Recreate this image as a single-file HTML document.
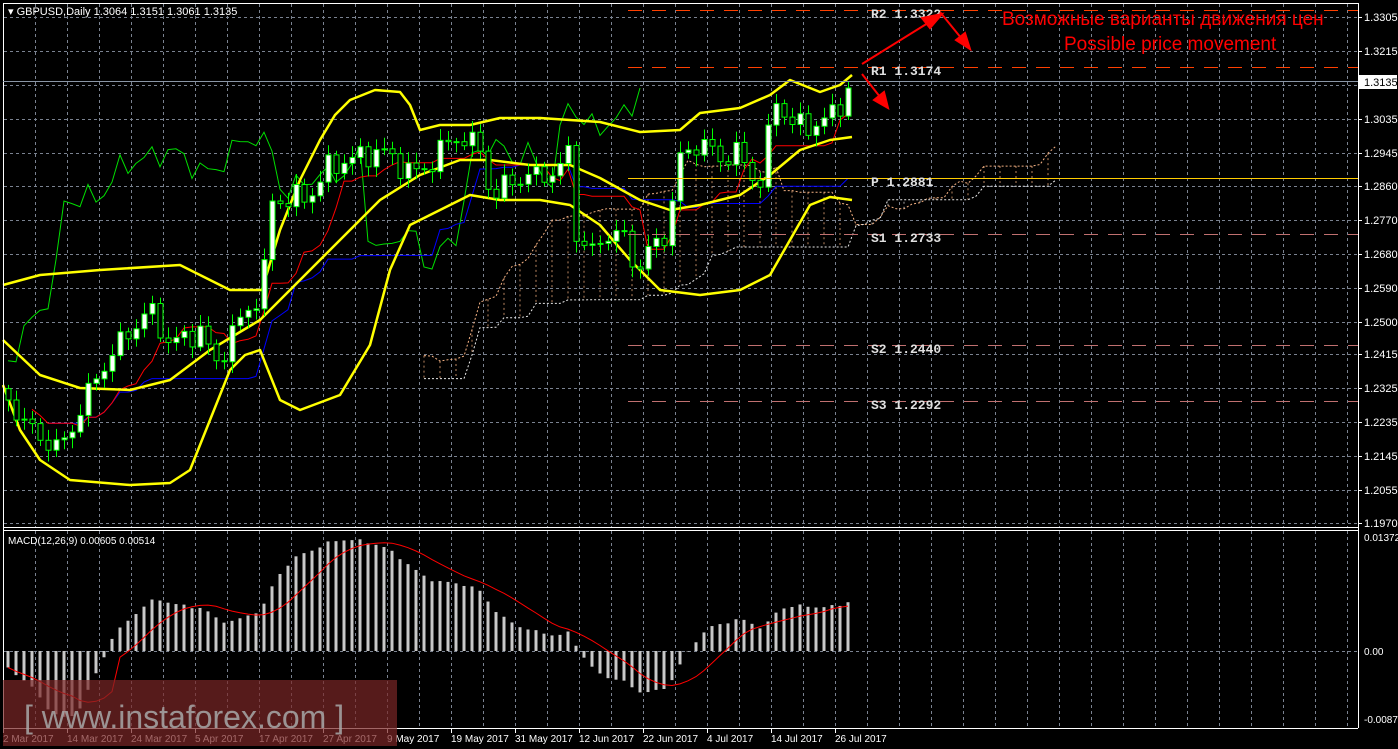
<!DOCTYPE html>
<html><head><meta charset="utf-8"><style>
html,body{margin:0;padding:0;background:#000;width:1398px;height:749px;overflow:hidden}
svg{display:block}
text{font-family:"Liberation Sans",sans-serif}
text.mono{font-family:"Liberation Mono",monospace}
</style></head><body>
<svg id="s" width="1398" height="749" viewBox="0 0 1398 749" xmlns="http://www.w3.org/2000/svg">
<rect width="1398" height="749" fill="#000"/>
<g id="grid"></g>
<g id="ich"></g>
<g id="bb" fill="none" stroke="#ffff00" stroke-width="2.5" stroke-linejoin="round">
<polyline points="3,285 40,275 100,270 180,265 230,290 262,290 280,230 300,180 320,140 335,115 350,100 375,90 400,92 410,105 420,130 440,125 470,125 500,118 540,118 570,120 600,122 640,132 680,130 700,113 740,108 770,95 790,80 820,92 840,85 852,75"/>
<polyline points="3,340 40,375 80,388 130,390 170,380 210,350 260,320 300,280 340,240 380,200 420,175 460,160 490,160 530,165 570,165 600,178 640,200 670,210 700,205 740,195 770,175 800,150 830,140 852,137"/>
<polyline points="3,385 20,430 40,460 70,480 130,485 170,483 190,470 210,420 230,370 245,355 260,350 280,400 300,410 340,395 370,345 390,270 410,225 440,210 470,195 500,200 540,200 570,205 600,225 630,260 660,290 700,295 740,290 770,275 790,240 810,205 830,197 852,200"/>
</g>
<g id="candles"></g>
<g id="piv"></g>
<g id="macd"></g>
<g stroke="#fff" fill="none" stroke-width="1">
<line x1="3.5" y1="3" x2="3.5" y2="728"/>
<line x1="1358.5" y1="3" x2="1358.5" y2="728"/>
<line x1="3" y1="3.5" x2="1358" y2="3.5"/>
<line x1="3" y1="527.5" x2="1358" y2="527.5"/>
<line x1="3" y1="530.5" x2="1358" y2="530.5"/>
<line x1="3" y1="728.5" x2="1358" y2="728.5"/>
</g>
<line x1="3" y1="81.5" x2="1358" y2="81.5" stroke="#8a96a6"/>
<rect x="1359" y="75" width="38" height="14" fill="#fff"/>
<text x="1364" y="86" font-size="11" fill="#000">1.3135</text>
<text x="8" y="15" font-size="11" fill="#fff">▾ GBPUSD,Daily  1.3064 1.3151 1.3061 1.3135</text>
<text x="8" y="544" font-size="10" fill="#fff">MACD(12,26,9) 0.00605 0.00514</text>
<g id="axis" font-size="11" fill="#fff"></g>
<text x="1002" y="25" font-size="19" fill="#ff0000">Возможные варианты движения цен</text>
<text x="1064" y="50" font-size="19" fill="#ff0000">Possible price movement</text>
<g stroke="#ff0000" stroke-width="2" fill="#ff0000">
<line x1="862" y1="64" x2="936" y2="18"/>
<polygon points="942,14 922,18 930,28"/>
<line x1="940" y1="12" x2="966" y2="44"/>
<polygon points="970,49 956,40 965,33"/>
<line x1="862" y1="74" x2="884" y2="102"/>
<polygon points="888,108 874,100 884,92"/>
</g>
<rect x="3" y="680" width="394" height="66" fill="#7a2626" opacity="0.7"/>
<text x="24" y="728" font-size="32" fill="#a8a8a8" opacity="0.85">[ www.instaforex.com ]</text>
</svg>
<script>
const S=document.getElementById('s'),NS='http://www.w3.org/2000/svg';
function el(p,t,a){const e=document.createElementNS(NS,t);for(const k in a)e.setAttribute(k,a[k]);p.appendChild(e);return e;}
const grid=document.getElementById('grid');
for(let x=35;x<1358;x+=32){el(grid,'line',{x1:x+.5,y1:4,x2:x+.5,y2:527,stroke:'#7a8290','stroke-dasharray':'3 3'});el(grid,'line',{x1:x+.5,y1:531,x2:x+.5,y2:728,stroke:'#7a8290','stroke-dasharray':'3 3'});}
const pl=[['1.3305',17],['1.3215',51],['1.3125',85],['1.3035',119],['1.2945',153],['1.2860',186],['1.2770',220],['1.2680',254],['1.2590',288],['1.2500',322],['1.2415',354],['1.2325',388],['1.2235',422],['1.2145',456],['1.2055',490],['1.1970',523]];
const ax=document.getElementById('axis');
pl.forEach(([t,y])=>{el(grid,'line',{x1:4,y1:y+.5,x2:1358,y2:y+.5,stroke:'#7a8290','stroke-dasharray':'3 3'});el(ax,'line',{x1:1358,y1:y+.5,x2:1362,y2:y+.5,stroke:'#fff'});if(y!=85){const e=el(ax,'text',{x:1364,y:y+4});e.textContent=t;}});
el(grid,'line',{x1:4,y1:651.5,x2:1358,y2:651.5,stroke:'#7a8290','stroke-dasharray':'3 3'});
[['0.01372',541],['0.00',655],['-0.00872',723]].forEach(([t,y])=>{const e=el(ax,'text',{x:1364,y:y,'font-size':10});e.textContent=t;});
const dates=['2 Mar 2017','14 Mar 2017','24 Mar 2017','5 Apr 2017','17 Apr 2017','27 Apr 2017','9 May 2017','19 May 2017','31 May 2017','12 Jun 2017','22 Jun 2017','4 Jul 2017','14 Jul 2017','26 Jul 2017'];
dates.forEach((d,i)=>{const e=el(ax,'text',{x:3+i*64,y:742,'font-size':10});e.textContent=d;el(ax,'line',{x1:3+i*64+.5,y1:728,x2:3+i*64+.5,y2:733,stroke:'#fff'});});
const kp=[[8,400],[30,430],[60,450],[75,420],[100,370],[130,330],[150,310],[170,345],[200,330],[215,365],[240,320],[262,290],[272,200],[290,200],[310,195],[330,165],[350,160],[380,150],[400,165],[420,175],[440,150],[460,135],[480,150],[492,200],[510,180],[540,175],[560,170],[568,150],[575,230],[590,255],[610,230],[625,240],[635,270],[650,250],[665,235],[680,160],[700,140],[720,160],[735,150],[750,175],[760,180],[775,100],[790,120],[805,130],[820,120],[835,115],[848,88]];
function interp(x){for(let i=0;i<kp.length-1;i++){if(x<=kp[i+1][0]){const [x0,y0]=kp[i],[x1,y1]=kp[i+1];return y0+(y1-y0)*(x-x0)/(x1-x0);}}return kp[kp.length-1][1];}
const N=106,X=i=>8+i*8,toY=p=>17+(1.3305-p)*3778,toP=y=>1.3305-(y-17)/3778;
let C=[],O=[],H=[],L=[];
for(let i=0;i<N;i++){let y=interp(X(i))+(i<N-1?9*Math.sin(i*1.7)+5*Math.sin(i*3.1):0);C.push(toP(y));}
for(let i=0;i<N;i++){O.push(i?C[i-1]:C[0]+0.003);const hi=Math.max(O[i],C[i]),lo=Math.min(O[i],C[i]);H.push(hi+0.001+0.002*Math.abs(Math.sin(i*2.3)));L.push(lo-0.001-0.002*Math.abs(Math.cos(i*1.9)));}
const cg=document.getElementById('candles');
for(let i=0;i<N;i++){const x=X(i);el(cg,'line',{x1:x+.5,y1:toY(H[i]),x2:x+.5,y2:toY(L[i]),stroke:'#00ff00'});const t=toY(Math.max(O[i],C[i])),b=toY(Math.min(O[i],C[i]));el(cg,'rect',{x:x-2,y:t,width:5,height:Math.max(1,b-t),fill:C[i]>=O[i]?'#fff':'#000',stroke:'#00ff00','stroke-width':1});}
const ig=document.getElementById('ich');
const mid=(n,i)=>{let a=-1e9,b=1e9;for(let j=Math.max(0,i-n+1);j<=i;j++){a=Math.max(a,H[j]);b=Math.min(b,L[j]);}return (a+b)/2;};
let tk=[],kj=[],sa=[],sb=[];
for(let i=0;i<N;i++){tk.push(mid(9,i));kj.push(mid(26,i));sb.push(mid(52,i));sa.push((tk[i]+kj[i])/2);}
const pts=(arr,sh,st)=>arr.map((v,i)=>i>=st?(X(i+sh))+','+toY(v).toFixed(1):null).filter(Boolean).join(' ');
for(let i=26;i<N;i+=2){const x=X(i+26);el(ig,'line',{x1:x,y1:toY(sa[i]),x2:x,y2:toY(sb[i]),stroke:sa[i]>sb[i]?'#e8a878':'#cccccc','stroke-dasharray':'2 3','stroke-opacity':0.8});}
el(ig,'polyline',{points:pts(sa,26,26),fill:'none',stroke:'#f4b183','stroke-dasharray':'2 2'});
el(ig,'polyline',{points:pts(sb,26,26),fill:'none',stroke:'#e8e8e8','stroke-dasharray':'2 2'});
el(ig,'polyline',{points:pts(C,-26,26),fill:'none',stroke:'#00e000'});
el(ig,'polyline',{points:pts(kj,0,5),fill:'none',stroke:'#0000ff'});
el(ig,'polyline',{points:pts(tk,0,3),fill:'none',stroke:'#ff0000'});
const pv=document.getElementById('piv');
[['R2 1.3322',10,'#ff4000',1],['R1 1.3174',67,'#ff4000',1],['P  1.2881',178,'#ffcc00',0],['S1 1.2733',234,'#c07070',1],['S2 1.2440',345,'#c07070',1],['S3 1.2292',401,'#c07070',1]].forEach(([t,y,c,d])=>{el(pv,'line',{x1:628,y1:y+.5,x2:1358,y2:y+.5,stroke:c,'stroke-dasharray':d?'14 10':'none'});const e=el(pv,'text',{x:871,y:y+8,'font-size':13,'font-weight':'bold',fill:'#e0e0e0','class':'mono'});e.textContent=t;});
const mg=document.getElementById('macd');
const ema=(n)=>{const k=2/(n+1);let r=[C[0]];for(let i=1;i<N;i++)r.push(C[i]*k+r[i-1]*(1-k));return r;};
const e12=ema(12),e26=ema(26);let m=e12.map((v,i)=>v-e26[i]),sg=[];
for(let i=0;i<N;i++){let s=0,c=0;for(let j=Math.max(0,i-8);j<=i;j++){s+=m[j];c++;}sg.push(s/c);}
const my=v=>Math.max(531,Math.min(728,651-v*8236));
for(let i=0;i<N;i++){let v=m[i];if(i<14)v=v*2.2-0.002;const y=my(v);el(mg,'rect',{x:X(i)-1.5,y:Math.min(y,651),width:3,height:Math.abs(y-651),fill:'#c8c8c8'});}
el(mg,'polyline',{points:sg.map((v,i)=>X(i)+','+my(i<14?v*2.2-0.002:v).toFixed(1)).join(' '),fill:'none',stroke:'#ff0000'});
</script>
</body></html>
